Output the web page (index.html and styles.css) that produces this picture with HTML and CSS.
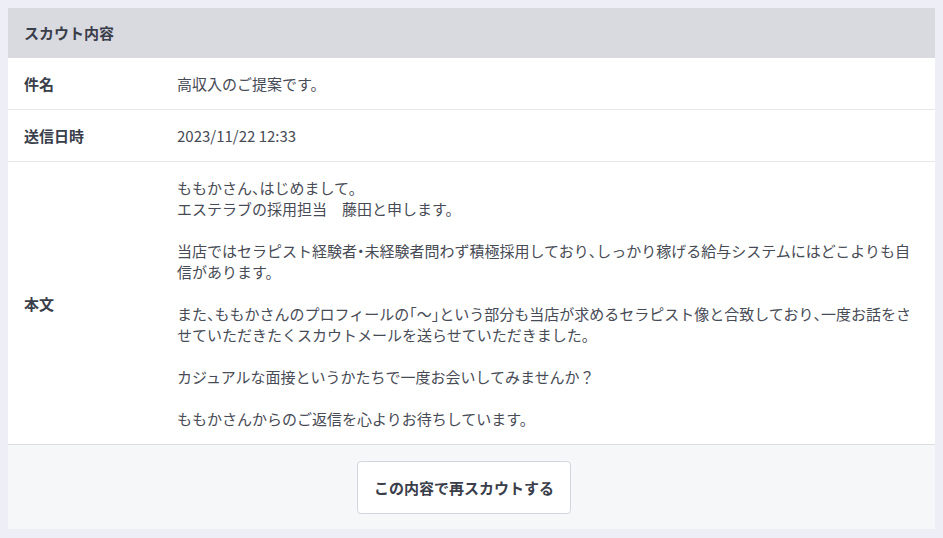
FILE: index.html
```
<!DOCTYPE html>
<html lang="ja">
<head>
  <meta charset="UTF-8">
  <meta name="viewport" content="width=device-width, initial-scale=1.0">
  <title>スカウト内容</title>
  <link rel="stylesheet" href="styles.css">
</head>
<body>
<div class="scout-card">
  <div class="scout-head">スカウト内容</div>
  <div class="scout-row">
    <div class="scout-label">件名</div>
    <div class="scout-value">高収入のご提案です。</div>
  </div>
  <div class="scout-row">
    <div class="scout-label">送信日時</div>
    <div class="scout-value">2023/11/22 12:33</div>
  </div>
  <div class="scout-row">
    <div class="scout-label">本文</div>
    <div class="scout-value scout-body">ももかさん<span class="p">、</span>はじめまして。
エステラブの採用担当　藤田と申します。

当店ではセラピスト経験者<span class="p">・</span>未経験者問わず積極採用しており<span class="p">、</span>しっかり稼げる給与システムにはどこよりも自信があります。

また<span class="p">、</span>ももかさんのプロフィールの<span class="p">「</span>〜<span class="p">」</span>という部分も当店が求めるセラピスト像と合致しており<span class="p">、</span>一度お話をさせていただきたくスカウトメールを送らせていただきました。

カジュアルな面接というかたちで一度お会いしてみませんか？

ももかさんからのご返信を心よりお待ちしています。</div>
  </div>
  <div class="scout-foot">
    <button type="button" class="rescout-btn">この内容で再スカウトする</button>
  </div>
</div>
</body>
</html>
```

FILE: styles.css
```
body { margin: 8px; background: #eeeff6; font-family: "Noto Sans CJK JP", "Noto Sans", sans-serif; font-size: 15px; color: #3d414c; }
.scout-card { background: #fff; box-shadow: 0 1px 2px rgba(40, 45, 80, 0.06); }
.scout-head { background: #d9d9e0; padding: 14px 16px; line-height: 22px; font-weight: bold; color: #3a3e4a; }
.scout-row { display: grid; grid-template-columns: 153px 1fr; align-items: center; padding: 15px 16px; line-height: 21px; border-bottom: 1px solid #e8e8ec; }
.scout-label { font-weight: bold; color: #3a3e4a; }
.scout-value { color: #474b55; }
.scout-body { white-space: pre-line; }
/* half-width punctuation like the original */
.scout-body .p { font-feature-settings: "halt"; }
.scout-foot { display: flex; justify-content: center; background: #f6f7f9; border-top: 1px solid #dcdde3; margin-top: -1px; padding: 16px 15px 15px 0; }
.rescout-btn { font-family: inherit; font-size: 15px; font-weight: bold; line-height: 21px; color: #3a3e4a; background: #fff; border: 1px solid #d3d6de; border-radius: 4px; padding: 15px 16px; cursor: pointer; }
```
